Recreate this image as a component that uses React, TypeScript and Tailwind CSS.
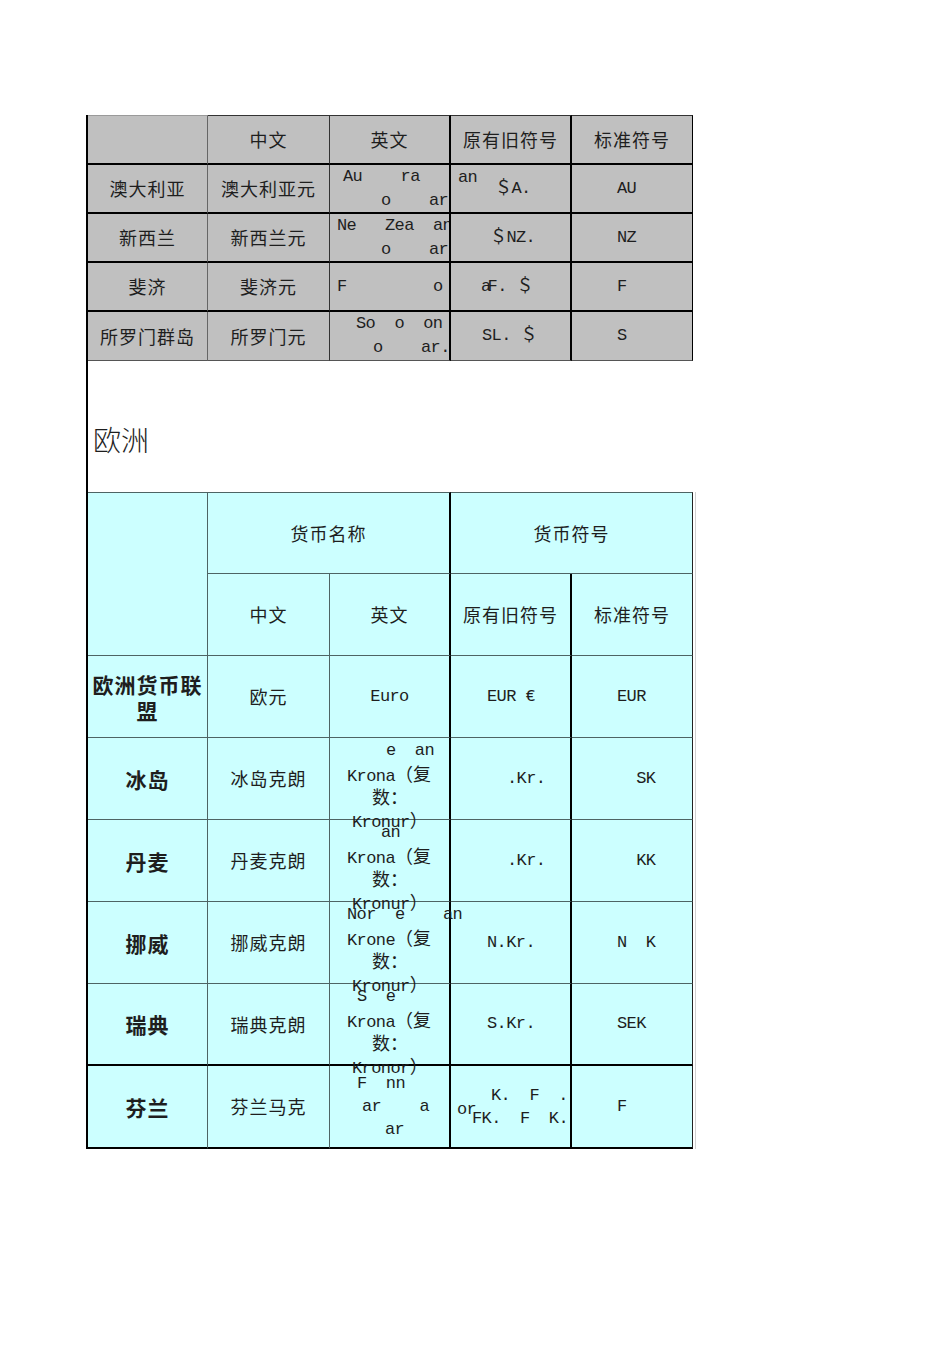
import type { ReactNode } from 'react';

const mono = "font-['Liberation_Mono','Noto_Sans_CJK_SC',monospace] text-[17px] tracking-[-0.6px]";
const cjk = "font-['Noto_Sans_CJK_SC',sans-serif] text-[18px] tracking-[1px]";
const boldCjk = "font-['Noto_Sans_CJK_SC',sans-serif] text-[21px] font-bold tracking-[1px]";

function Zh({ children }: { children: ReactNode }) {
  return <span className="font-['Noto_Sans_CJK_SC',sans-serif] text-[18px] tracking-normal">{children}</span>;
}

interface Line {
  text: ReactNode;
  pad: string;
}

// garbled english column: each line sits at its own left offset
function Lines({ lines, tall }: { lines: Line[]; tall?: boolean }) {
  return (
    <div className="w-full">
      {lines.map((l, i) => (
        <div
          key={i}
          className={`whitespace-pre ${tall ? 'h-[24px] leading-[24px]' : 'h-[23px] leading-[23px]'} ${l.pad}`}
        >
          {l.text}
        </div>
      ))}
    </div>
  );
}

interface GrayRow {
  country: string;
  name: string;
  en: Line[];
  old: ReactNode;
  std: string;
}

const oceania: GrayRow[] = [
  {
    country: '澳大利亚',
    name: '澳大利亚元',
    en: [
      { text: 'Au    ra', pad: 'pl-[13px]' },
      { text: 'o    ar', pad: 'pl-[51px]' },
    ],
    old: (
      <>
        <span className="absolute left-[7px] top-[1px] leading-[24px]">an</span>
        <div className="pl-[44px]">＄A.</div>
      </>
    ),
    std: 'AU',
  },
  {
    country: '新西兰',
    name: '新西兰元',
    en: [
      { text: 'Ne   Zea  an', pad: 'pl-[7px]' },
      { text: 'o    ar', pad: 'pl-[51px]' },
    ],
    old: <div className="pl-[39px]">＄NZ.</div>,
    std: 'NZ',
  },
  {
    country: '斐济',
    name: '斐济元',
    en: [{ text: 'F         o', pad: 'pl-[7px]' }],
    old: (
      <div className="pl-[30px]">
        <span className="-mr-[3px]">a</span>F. ＄
      </div>
    ),
    std: 'F',
  },
  {
    country: '所罗门群岛',
    name: '所罗门元',
    en: [
      { text: 'So  o  on', pad: 'pl-[26px]' },
      { text: 'o    ar.', pad: 'pl-[43px]' },
    ],
    old: <div className="pl-[31px]">SL. ＄</div>,
    std: 'S',
  },
];

interface CyanRow {
  country: string;
  name: string;
  en: ReactNode;
  old: ReactNode;
  std: string;
  last?: boolean;
  thickBottom?: boolean;
}

const plural = (word: string, end: string, first: Line): Line[] => [
  first,
  {
    text: (
      <>
        {word}
        <Zh>（复</Zh>
      </>
    ),
    pad: 'pl-[17px]',
  },
  { text: <Zh>数：</Zh>, pad: 'pl-[42px]' },
  {
    text: (
      <>
        {end}
        <Zh>）</Zh>
      </>
    ),
    pad: 'pl-[22px]',
  },
];

const europe: CyanRow[] = [
  {
    country: '欧洲货币联盟',
    name: '欧元',
    en: <div className="w-full text-center">Euro</div>,
    old: <div className="pl-[36px]">EUR €</div>,
    std: 'EUR',
  },
  {
    country: '冰岛',
    name: '冰岛克朗',
    en: (
      <div className="self-start pt-[1px] w-full">
        <Lines lines={plural('Krona', 'Kronur', { text: 'e  an', pad: 'pl-[56px]' })} />
      </div>
    ),
    old: <div className="pl-[56px]">.Kr.</div>,
    std: '  SK',
  },
  {
    country: '丹麦',
    name: '丹麦克朗',
    en: (
      <div className="self-start pt-[1px] w-full">
        <Lines lines={plural('Krona', 'Kronur', { text: 'an', pad: 'pl-[51px]' })} />
      </div>
    ),
    old: <div className="pl-[56px]">.Kr.</div>,
    std: '  KK',
  },
  {
    country: '挪威',
    name: '挪威克朗',
    en: (
      <div className="self-start pt-[1px] w-full">
        <Lines lines={plural('Krone', 'Kronur', { text: 'Nor  e    an', pad: 'pl-[17px]' })} />
      </div>
    ),
    old: <div className="pl-[36px]">N.Kr.</div>,
    std: 'N  K',
  },
  {
    country: '瑞典',
    name: '瑞典克朗',
    en: (
      <div className="self-start pt-[1px] w-full">
        <Lines lines={plural('Krona', 'Kronor', { text: 'S  e', pad: 'pl-[27px]' })} />
      </div>
    ),
    old: <div className="pl-[36px]">S.Kr.</div>,
    std: 'SEK',
    thickBottom: true,
  },
  {
    country: '芬兰',
    name: '芬兰马克',
    en: (
      <Lines
        lines={[
          { text: 'F  nn', pad: 'pl-[27px]' },
          { text: 'ar    a', pad: 'pl-[32px]' },
          { text: 'ar', pad: 'pl-[55px]' },
        ]}
      />
    ),
    old: (
      <>
        <span className="absolute left-[6px] top-[32px] leading-[23px]">or</span>
        <Lines
          lines={[
            { text: 'K.  F  .', pad: 'pl-[40px]' },
            { text: 'FK.  F  K.', pad: 'pl-[21px]' },
          ]}
        />
      </>
    ),
    std: 'F',
    last: true,
  },
];

export default function App() {
  return (
    <div className="min-h-[1345px] bg-white pt-[115px] pl-[86px] text-[#1e1e1e]">
      <div className="w-[607px] border-l-2 border-black">
        {/* Oceania block (gray) */}
        <div className="grid grid-cols-[120px_122px_121px_121px_121px] bg-[#c0c0c0]">
          <div className="h-[50px] border-t border-r border-b-2 border-t-[#9a9a9a] border-r-[#666] border-b-black" />
          <div className={`h-[50px] border-t border-r border-b-2 border-t-[#333] border-r-[#333] border-b-black flex items-center justify-center ${cjk}`}>
            中文
          </div>
          <div className={`h-[50px] border-t border-r-2 border-b-2 border-t-[#333] border-r-black border-b-black flex items-center justify-center ${cjk}`}>
            英文
          </div>
          <div className={`h-[50px] border-t border-r-2 border-b-2 border-t-[#333] border-r-black border-b-black flex items-center justify-center ${cjk}`}>
            原有旧符号
          </div>
          <div className={`h-[50px] border-t border-r border-b-2 border-t-[#333] border-r-black border-b-black flex items-center justify-center ${cjk}`}>
            标准符号
          </div>

          {oceania.map((r, i) => {
            const bottom = i === oceania.length - 1 ? 'border-b border-b-[#555]' : 'border-b-2 border-b-black';
            return (
              <div key={r.country} className="contents">
                <div className={`h-[49px] border-r border-r-[#666] ${bottom} flex items-center justify-center ${cjk}`}>
                  {r.country}
                </div>
                <div className={`h-[49px] border-r border-r-[#333] ${bottom} flex items-center justify-center ${cjk}`}>
                  {r.name}
                </div>
                <div className={`h-[49px] border-r-2 border-r-black ${bottom} flex items-center overflow-hidden ${mono}`}>
                  <Lines lines={r.en} tall />
                </div>
                <div className={`relative h-[49px] border-r-2 border-r-black ${bottom} flex items-center whitespace-pre ${mono}`}>
                  {r.old}
                </div>
                <div className={`h-[49px] border-r border-r-black ${bottom} flex items-center pl-[45px] ${mono}`}>
                  {r.std}
                </div>
              </div>
            );
          })}
        </div>

        {/* Europe heading */}
        <div className="h-[131px] bg-white pl-[5px] pt-[62px]">
          <div className="font-['Noto_Sans_CJK_SC',sans-serif] text-[28px] leading-[32px] font-light">欧洲</div>
        </div>

        {/* Europe block (cyan) */}
        <div className="grid grid-cols-[120px_122px_121px_121px_121px] bg-[#ccffff] shadow-[2px_0_0_#ffffff,3px_0_0_#d0d0d0]">
          <div className="row-span-2 h-[164px] border-t border-r border-b border-[#4e6464]" />
          <div className={`col-span-2 h-[82px] border-t border-b border-t-[#4e6464] border-b-[#4e6464] border-r-2 border-r-black flex items-center justify-center ${cjk}`}>
            货币名称
          </div>
          <div className={`col-span-2 h-[82px] border-t border-b border-t-[#4e6464] border-b-[#4e6464] border-r border-r-[#222] flex items-center justify-center ${cjk}`}>
            货币符号
          </div>
          <div className={`h-[82px] border-r border-b border-[#4e6464] flex items-center justify-center ${cjk}`}>中文</div>
          <div className={`h-[82px] border-r-2 border-b border-r-black border-b-[#4e6464] flex items-center justify-center ${cjk}`}>
            英文
          </div>
          <div className={`h-[82px] border-r-2 border-b border-r-black border-b-[#4e6464] flex items-center justify-center ${cjk}`}>
            原有旧符号
          </div>
          <div className={`h-[82px] border-r border-b border-r-[#222] border-b-[#4e6464] flex items-center justify-center ${cjk}`}>
            标准符号
          </div>

          {europe.map((r) => {
            const bottom = r.last || r.thickBottom ? 'border-b-2 border-b-black' : 'border-b border-b-[#4e6464]';
            const h = r.last ? 'h-[83px]' : 'h-[82px]';
            return (
              <div key={r.country} className="contents">
                <div className={`${h} border-r border-r-[#4e6464] ${bottom} flex items-center justify-center text-center leading-[26px] px-[2px] ${boldCjk}`}>
                  {r.country}
                </div>
                <div className={`${h} border-r border-r-[#4e6464] ${bottom} flex items-center justify-center ${cjk}`}>
                  {r.name}
                </div>
                <div className={`${h} border-r-2 border-r-black ${bottom} flex items-center ${mono}`}>{r.en}</div>
                <div className={`relative ${h} border-r-2 border-r-black ${bottom} flex items-center whitespace-pre ${mono}`}>
                  {r.old}
                </div>
                <div className={`${h} border-r border-r-[#222] ${bottom} flex items-center whitespace-pre pl-[45px] ${mono}`}>
                  {r.std}
                </div>
              </div>
            );
          })}
        </div>
      </div>
    </div>
  );
}
